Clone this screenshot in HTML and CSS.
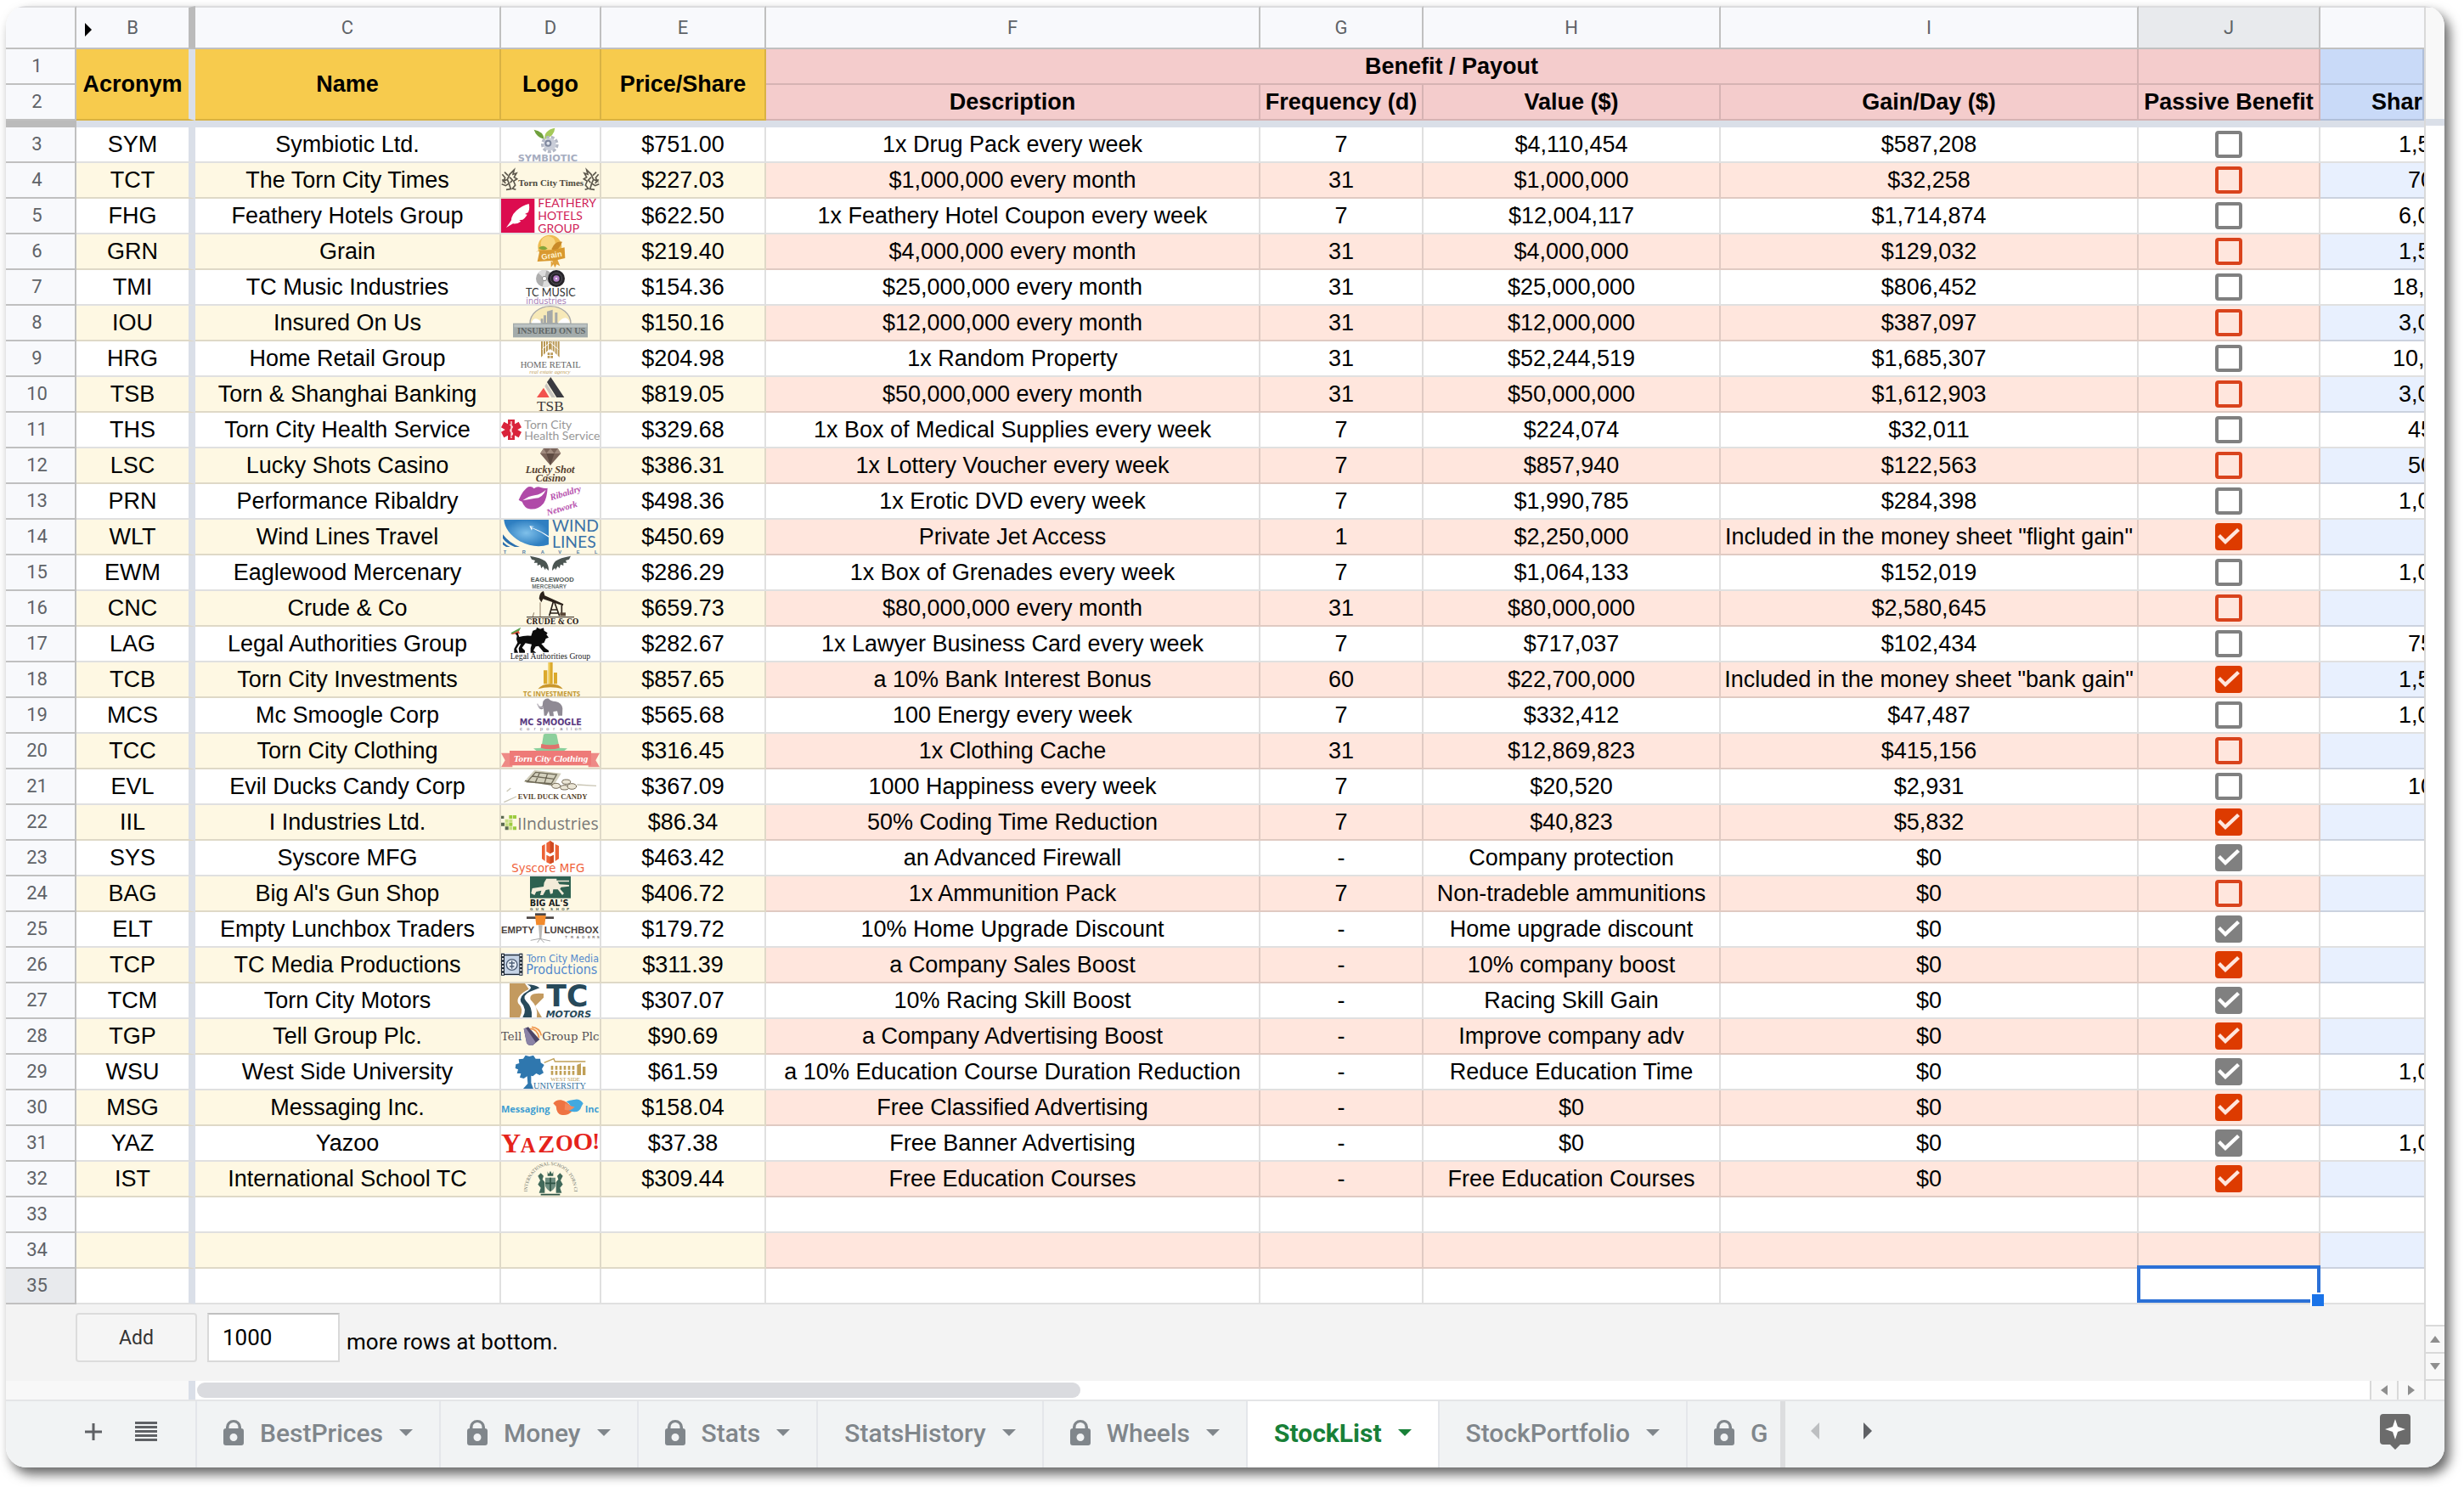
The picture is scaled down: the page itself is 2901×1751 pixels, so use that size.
FILE: index.html
```html
<!DOCTYPE html>
<html lang="en">
<head>
<meta charset="utf-8">
<title>StockList</title>
<link rel="stylesheet" href="styles.css">
</head>
<body>
<main class="window">
<div class="sheet">
<div class="pane">
<table class="grid">
<colgroup><col class="c-num"><col class="c-b"><col class="c-c"><col class="c-d"><col class="c-e"><col class="c-f"><col class="c-g"><col class="c-h"><col class="c-i"><col class="c-j"><col></colgroup>
<thead>
<tr class="letters"><th></th><th class="has-arrow"><svg class="expand" viewBox="0 0 8 16"><path d="M0 0L8 8L0 16Z"/></svg>B</th><th>C</th><th>D</th><th>E</th><th>F</th><th>G</th><th>H</th><th>I</th><th class="current">J</th><th></th></tr>
<tr class="titles"><th class="num">1</th><th class="gold pin" rowspan="2">Acronym</th><th class="gold" rowspan="2">Name</th><th class="gold" rowspan="2">Logo</th><th class="gold" rowspan="2">Price/Share</th><th class="pink" colspan="4">Benefit / Payout</th><th class="pink"></th><th class="blue"></th></tr>
<tr class="titles"><th class="num">2</th><th class="pink">Description</th><th class="pink">Frequency (d)</th><th class="pink">Value ($)</th><th class="pink">Gain/Day ($)</th><th class="pink">Passive Benefit</th><th class="blue cut">Share</th></tr>
<tr class="freeze"><td></td><td colspan="10"></td></tr>
</thead>
<tbody>
<tr><th>3</th><td>SYM</td><td>Symbiotic Ltd.</td><td><svg class="logo" viewBox="0 0 348 120"><path d="M152 42Q150 14 116 8Q124 34 152 42Z" fill="#6fa03c"/><path d="M154 42Q150 10 190 2Q188 32 154 42Z" fill="#a5c95a"/><circle cx="172" cy="60" r="26" fill="none" stroke="#b4b9c6" stroke-width="10" stroke-dasharray="12 6"/><circle cx="172" cy="60" r="22" fill="#c9cdd8"/><circle cx="166" cy="56" r="12" fill="#7d869c"/><circle cx="166" cy="56" r="6" fill="#dfe3ec"/><text x="59" y="119" class="dj b" font-size="34" fill="#a6adc0">SYMBIOTIC</text></svg></td><td>$751.00</td><td>1x Drug Pack every week</td><td>7</td><td>$4,110,454</td><td>$587,208</td><td><input type="checkbox" aria-label="SYM passive benefit"></td><td>1,5</td></tr>
<tr><th>4</th><td>TCT</td><td>The Torn City Times</td><td><svg class="logo" viewBox="0 0 348 120"><g id="griffin" fill="none" stroke="#5d584d" stroke-width="5"><path d="M4 40L14 52L8 64L22 58L30 40L46 24L42 40L54 36L46 50L56 56L44 64L50 78L40 90L52 94M22 58L28 72L16 80L2 74M28 72L34 92L18 94M12 32L24 44M4 58L16 72M30 50L40 60L32 70"/></g><use href="#griffin" transform="matrix(-1 0 0 1 348 0)"/><text x="61" y="82" class="se b" font-size="33" fill="#4f4a40">Torn City Times</text></svg></td><td>$227.03</td><td>$1,000,000 every month</td><td>31</td><td>$1,000,000</td><td>$32,258</td><td><input type="checkbox" aria-label="TCT passive benefit"></td><td class="two">70</td></tr>
<tr><th>5</th><td>FHG</td><td>Feathery Hotels Group</td><td><svg class="logo" viewBox="0 0 348 120"><rect width="118" height="120" fill="#dc0c4f"/><path d="M18 102Q30 86 36 76Q36 58 54 42Q74 24 98 18Q102 34 96 48L84 54L92 56Q86 68 76 74L64 76L70 80Q58 90 42 88Q32 94 18 102Z" fill="#fff"/><g class="la" font-size="42" fill="#d01c56"><text x="130" y="31">FEATHERY</text><text x="130" y="76">HOTELS</text><text x="130" y="119">GROUP</text></g></svg></td><td>$622.50</td><td>1x Feathery Hotel Coupon every week</td><td>7</td><td>$12,004,117</td><td>$1,714,874</td><td><input type="checkbox" aria-label="FHG passive benefit"></td><td>6,0</td></tr>
<tr><th>6</th><td>GRN</td><td>Grain</td><td><svg class="logo" viewBox="0 0 348 120"><circle cx="172" cy="44" r="42" fill="#eebb50"/><circle cx="166" cy="32" r="26" fill="#f8d680"/><path d="M132 48Q150 34 164 50Q148 60 132 48Z" fill="#86a53a"/><path d="M178 52Q190 22 216 26Q206 50 190 62Z" fill="#c98a28"/><path d="M180 92L190 118L196 106L208 112L198 86ZM176 92L176 116L186 104Z" fill="#e0a23c"/><path d="M122 62L136 58L128 96L190 92L226 84L224 46L190 54L134 56Z" fill="#d9992f"/><text x="144" y="90" class="sa b" font-size="28" fill="#fff3cf" transform="rotate(-10 144 90)">Grain</text></svg></td><td>$219.40</td><td>$4,000,000 every month</td><td>31</td><td>$4,000,000</td><td>$129,032</td><td><input type="checkbox" aria-label="GRN passive benefit"></td><td>1,5</td></tr>
<tr><th>7</th><td>TMI</td><td>TC Music Industries</td><td><svg class="logo" viewBox="0 0 348 120"><circle cx="153" cy="30" r="30" fill="#aeaeae"/><path d="M153 30L130 10A30 30 0 0 1 160 1ZM153 30L178 50A30 30 0 0 1 146 59Z" fill="#dcdcdc"/><circle cx="153" cy="30" r="8" fill="#fff" stroke="#8a8a8a" stroke-width="3"/><circle cx="195" cy="30" r="30" fill="#26242a"/><circle cx="195" cy="30" r="20" fill="none" stroke="#56525c" stroke-width="3"/><circle cx="195" cy="30" r="11" fill="#b27fc6"/><circle cx="195" cy="30" r="3" fill="#fff"/><text x="87" y="94" class="la" font-size="38" fill="#333">TC MUSIC</text><text x="88" y="119" class="dj" font-size="29" fill="#a981b8">industries</text></svg></td><td>$154.36</td><td>$25,000,000 every month</td><td>31</td><td>$25,000,000</td><td>$806,452</td><td><input type="checkbox" aria-label="TMI passive benefit"></td><td class="four">18,</td></tr>
<tr><th>8</th><td>IOU</td><td>Insured On Us</td><td><svg class="logo" viewBox="0 0 348 120"><path d="M102 62A72 60 0 0 1 246 62Z" fill="#f7e9b8" stroke="#a9a9a9" stroke-width="4"/><path d="M106 62Q118 30 146 62ZM200 62Q230 24 244 62Z" fill="#fff"/><path d="M140 62V46h8V62ZM150 62V34h9V62ZM162 62V20L182 14V62ZM190 62V24h9V62Z" fill="#a5a8a8"/><rect x="42" y="62" width="264" height="50" fill="#a3abab"/><rect x="46" y="66" width="256" height="10" fill="#bcc3c3"/><text x="57" y="99" class="se b" font-size="31" fill="#5f6666">INSURED ON US</text></svg></td><td>$150.16</td><td>$12,000,000 every month</td><td>31</td><td>$12,000,000</td><td>$387,097</td><td><input type="checkbox" aria-label="IOU passive benefit"></td><td>3,0</td></tr>
<tr><th>9</th><td>HRG</td><td>Home Retail Group</td><td><svg class="logo" viewBox="0 0 348 120"><path d="M141 0h6V50L141 56ZM150 0h6V41L150 47ZM159 0h6V32L159 38ZM168 0h11V32L173 26L168 32ZM182 0h6V38L182 32ZM191 0h6V47L191 41ZM200 0h6V56L200 50Z" fill="#b99753"/><path d="M145 28L173 4L202 28" fill="none" stroke="#fff" stroke-width="3"/><path d="M164 40h8v8h-8ZM175 40h8v8h-8ZM164 51h8v8h-8ZM175 51h8v8h-8Z" fill="#b99753"/><text x="68" y="92" class="se" font-size="32" fill="#666">HOME RETAIL</text><text x="100" y="114" class="se i" font-size="20" fill="#c4a261">real estate agency</text></svg></td><td>$204.98</td><td>1x Random Property</td><td>31</td><td>$52,244,519</td><td>$1,685,307</td><td><input type="checkbox" aria-label="HRG passive benefit"></td><td class="four">10,</td></tr>
<tr><th>10</th><td>TSB</td><td>Torn &amp; Shanghai Banking</td><td><svg class="logo" viewBox="0 0 348 120"><path d="M126 72L150 38L170 72Z" fill="#f2524e"/><path d="M154 32L160 22L192 72H178Z" fill="#c9c6c0"/><path d="M162 18L175 0L223 72H196Z" fill="#3b3b41"/><text x="126" y="119" class="se" font-size="52" fill="#3c3a3a">TSB</text></svg></td><td>$819.05</td><td>$50,000,000 every month</td><td>31</td><td>$50,000,000</td><td>$1,612,903</td><td><input type="checkbox" aria-label="TSB passive benefit"></td><td>3,0</td></tr>
<tr><th>11</th><td>THS</td><td>Torn City Health Service</td><td><svg class="logo" viewBox="0 0 348 120"><path d="M24 24H48V40L62 32L72 52L58 60L72 68L62 88L48 80V96H24V80L10 88L0 68L14 60L0 52L10 32L24 40Z" fill="#d9233a"/><path d="M36 30V90M30 42Q46 48 36 56Q28 64 38 70Q44 76 34 82" fill="none" stroke="#fbdfe2" stroke-width="4"/><g class="la" font-size="42" fill="#989898"><text x="82" y="56">Torn City</text><text x="82" y="95">Health Service</text></g></svg></td><td>$329.68</td><td>1x Box of Medical Supplies every week</td><td>7</td><td>$224,074</td><td>$32,011</td><td><input type="checkbox" aria-label="THS passive benefit"></td><td class="two">45</td></tr>
<tr><th>12</th><td>LSC</td><td>Lucky Shots Casino</td><td><svg class="logo" viewBox="0 0 348 120"><path d="M138 18L150 0H200L211 18L174 60Z" fill="#7b655a"/><path d="M138 18H211L200 0L188 18L174 0L160 18L150 0Z" fill="#a08b7e"/><path d="M160 18H188L174 60Z" fill="#5d4a41"/><g class="se b i" font-size="37" fill="#54402f"><text x="86" y="86">Lucky Shot</text><text x="122" y="118">Casino</text></g></svg></td><td>$386.31</td><td>1x Lottery Voucher every week</td><td>7</td><td>$857,940</td><td>$122,563</td><td><input type="checkbox" aria-label="LSC passive benefit"></td><td class="two">50</td></tr>
<tr><th>13</th><td>PRN</td><td>Performance Ribaldry</td><td><svg class="logo" viewBox="0 0 348 120"><path d="M62 56Q78 20 96 10Q108 6 116 16Q128 6 140 12Q154 16 164 14Q162 50 150 68Q130 92 100 88Q82 84 74 62Q68 60 62 56Z" fill="#b04aa8"/><path d="M76 58Q98 42 118 40Q142 36 158 20Q146 50 120 50Q100 54 76 58Z" fill="#fff"/><g class="se b i" font-size="32" fill="#b752ae"><text x="176" y="58" transform="rotate(-17 176 58)">Ribaldry</text><text x="164" y="112" transform="rotate(-17 164 112)">Network</text></g></svg></td><td>$498.36</td><td>1x Erotic DVD every week</td><td>7</td><td>$1,990,785</td><td>$284,398</td><td><input type="checkbox" aria-label="PRN passive benefit"></td><td>1,0</td></tr>
<tr><th>14</th><td>WLT</td><td>Wind Lines Travel</td><td><svg class="logo" viewBox="0 0 348 120"><defs><radialGradient id="sky"><stop offset="0" stop-color="#7fc0ea"/><stop offset="1" stop-color="#2f7fc1"/></radialGradient></defs><path d="M10 0H168V88Q120 104 66 76Q14 44 10 0Z" fill="url(#sky)"/><path d="M168 58Q140 38 104 26L118 24L100 22L108 38L110 30Q140 42 168 62Z" fill="#fff"/><path d="M6 52Q30 84 66 96H48Q18 84 6 66ZM6 78Q18 90 32 96H18Q8 90 6 88Z" fill="#2a6fae"/><g class="la" font-size="58" fill="#3a72a8"><text x="180" y="43">WIND</text><text x="180" y="98">LINES</text></g><text x="8 74 140 202 266 330" y="119" class="sa b" font-size="17" fill="#4f7ba6">TRAVEL</text></svg></td><td>$450.69</td><td>Private Jet Access</td><td>1</td><td>$2,250,000</td><td>Included in the money sheet "flight gain"</td><td><input type="checkbox" checked aria-label="WLT passive benefit"></td><td></td></tr>
<tr><th>15</th><td>EWM</td><td>Eaglewood Mercenary</td><td><svg class="logo" viewBox="0 0 348 120"><g id="wing" fill="#4b5552"><path d="M102 2Q140 8 156 20Q168 32 168 54L158 44L156 52L148 38L142 46L138 32L128 36L128 26L116 26L120 18L108 14Z"/></g><use href="#wing" transform="matrix(-1 0 0 1 348 0)"/><text x="104" y="92" class="sa b" font-size="23" fill="#4b5552">EAGLEWOOD</text><text x="109" y="118" class="sa b" font-size="19" fill="#6a7371">MERCENARY</text></svg></td><td>$286.29</td><td>1x Box of Grenades every week</td><td>7</td><td>$1,064,133</td><td>$152,019</td><td><input type="checkbox" aria-label="EWM passive benefit"></td><td>1,0</td></tr>
<tr><th>16</th><td>CNC</td><td>Crude &amp; Co</td><td><svg class="logo" viewBox="0 0 348 120"><path d="M134 26Q136 4 150 0L154 16L220 46L218 52L148 28L142 40Z" fill="#2b211a"/><path d="M184 38L170 88M188 38L206 88M178 66H198M174 78H202M214 50V78" stroke="#2b211a" stroke-width="5" fill="none"/><rect x="208" y="76" width="20" height="12" fill="#5a4838"/><path d="M90 92H258" stroke="#2b211a" stroke-width="3"/><path d="M138 40V90M116 76L112 90" stroke="#8a7862" stroke-width="3"/><text x="89" y="118" class="ds b" font-size="25" fill="#2b211a">CRUDE &amp; CO</text></svg></td><td>$659.73</td><td>$80,000,000 every month</td><td>31</td><td>$80,000,000</td><td>$2,580,645</td><td><input type="checkbox" aria-label="CNC passive benefit"></td><td></td></tr>
<tr><th>17</th><td>LAG</td><td>Legal Authorities Group</td><td><svg class="logo" viewBox="0 0 348 120"><path d="M34 22L70 2L64 14L40 28Z" fill="#5aa04a"/><path d="M32 28L62 14L66 24Z" fill="#e2503c"/><path d="M50 24L58 20L64 36Q80 30 106 32L112 14L124 10L126 2L138 8L150 4L152 14L164 22L160 28L168 38L158 42L152 56L142 60L156 76L168 84V90H150L132 68L122 70L114 84L124 92H104V76L108 62L86 58L74 74L84 84V92H64L62 76L70 60L64 62L54 78L60 92H46V78L58 56L54 44L56 32Z" fill="#0c0c0c"/><text x="32" y="114" class="se" font-size="29" fill="#222">Legal Authorities Group</text></svg></td><td>$282.67</td><td>1x Lawyer Business Card every week</td><td>7</td><td>$717,037</td><td>$102,434</td><td><input type="checkbox" aria-label="LAG passive benefit"></td><td class="two">75</td></tr>
<tr><th>18</th><td>TCB</td><td>Torn City Investments</td><td><svg class="logo" viewBox="0 0 348 120"><path d="M150 28h13V76h-13ZM167 0h15V76h-15ZM186 36h12V76h-12Z" fill="#dba92c"/><path d="M167 0h6V76h-6Z" fill="#f0cd58"/><path d="M130 94Q144 76 174 76Q206 76 218 94Q174 82 130 94Z" fill="#c9962a"/><text x="78" y="121" class="os b" font-size="24" fill="#c39a35">TC INVESTMENTS</text></svg></td><td>$857.65</td><td>a 10% Bank Interest Bonus</td><td>60</td><td>$22,700,000</td><td>Included in the money sheet "bank gain"</td><td><input type="checkbox" checked aria-label="TCB passive benefit"></td><td>1,5</td></tr>
<tr><th>19</th><td>MCS</td><td>Mc Smoogle Corp</td><td><svg class="logo" viewBox="0 0 348 120"><path d="M148 12Q156 0 168 2Q174 10 192 12Q214 16 217 36L216 62H202L198 46L184 48L186 64H172L168 46L160 62H152L150 36Q144 44 134 36L130 24Q138 34 146 28Z" fill="#8f8a94"/><path d="M150 32Q134 40 128 20" fill="none" stroke="#b8b3bc" stroke-width="4"/><text x="65" y="97" class="dc b" font-size="32" fill="#5b3b82">MC SMOOGLE</text><text x="66 91 116 138 160 184 208 230 246 260 274" y="115" class="sa" font-size="17" fill="#77717e">corporation</text></svg></td><td>$565.68</td><td>100 Energy every week</td><td>7</td><td>$332,412</td><td>$47,487</td><td><input type="checkbox" aria-label="MCS passive benefit"></td><td>1,0</td></tr>
<tr><th>20</th><td>TCC</td><td>Torn City Clothing</td><td><svg class="logo" viewBox="0 0 348 120"><path d="M0 68H40V118H0L14 94ZM348 68H308V118H348L334 94Z" fill="#ee8a86"/><path d="M142 50L150 2Q174 -6 196 2L206 50L234 52Q220 68 174 68Q128 68 114 52Z" fill="#8ccf9c"/><path d="M142 36Q174 44 204 36L206 50Q174 60 140 50Z" fill="#e0716c"/><path d="M30 60H318V112H30Z" fill="#ee7a78"/><text x="44" y="98" class="se b i" font-size="34" fill="#fff">Torn City Clothing</text></svg></td><td>$316.45</td><td>1x Clothing Cache</td><td>31</td><td>$12,869,823</td><td>$415,156</td><td><input type="checkbox" aria-label="TCC passive benefit"></td><td></td></tr>
<tr><th>21</th><td>EVL</td><td>Evil Ducks Candy Corp</td><td><svg class="logo" viewBox="0 0 348 120"><path d="M80 44L118 2L212 14L186 56Z" fill="#d3d0bd"/><path d="M92 44L122 10L196 18L178 50ZM84 40L186 56M110 24L188 34M136 12L120 48M164 14L152 52" fill="none" stroke="#6f6a58" stroke-width="4"/><g fill="#ebe6d6" stroke="#6f6450" stroke-width="3"><ellipse cx="194" cy="58" rx="15" ry="9"/><ellipse cx="224" cy="64" rx="15" ry="8"/><ellipse cx="250" cy="60" rx="16" ry="10"/><ellipse cx="230" cy="44" rx="15" ry="8"/></g><path d="M268 54L336 58M20 78L34 66M10 116L54 96" stroke="#c9c5b4" stroke-width="4"/><text x="59" y="104" class="se b" font-size="26" fill="#57432c">EVIL DUCK CANDY</text></svg></td><td>$367.09</td><td>1000 Happiness every week</td><td>7</td><td>$20,520</td><td>$2,931</td><td><input type="checkbox" aria-label="EVL passive benefit"></td><td class="two">10</td></tr>
<tr><th>22</th><td>IIL</td><td>I Industries Ltd.</td><td><svg class="logo" viewBox="0 0 348 120"><path d="M28 36h12v12H28ZM42 36h12v12H42ZM28 62h12v12H28ZM42 76h12v12H42Z" fill="#9ccb3f"/><path d="M14 50h12v12H14ZM28 50h12v12H28ZM28 76h12v12H28ZM14 64h12v12H14Z" fill="#c7dd83"/><path d="M0 62h12v12H0ZM14 76h12v12H14ZM0 38h10v10H0Z" fill="#5c6b52"/><text x="58" y="86" class="os" font-size="58" fill="#777">IIndustries</text></svg></td><td>$86.34</td><td>50% Coding Time Reduction</td><td>7</td><td>$40,823</td><td>$5,832</td><td><input type="checkbox" checked aria-label="IIL passive benefit"></td><td></td></tr>
<tr><th>23</th><td>SYS</td><td>Syscore MFG</td><td><svg class="logo" viewBox="0 0 348 120"><path d="M144 18L155 12V72L144 64ZM160 8L173 0L186 8V38L173 46L160 38ZM160 50L173 56L186 50V76L173 82L160 76ZM191 12L204 18V64L191 72Z" fill="#ec6236"/><path d="M173 0L186 8V38L173 46ZM173 56L186 50V76L173 82Z" fill="#cf4a22"/><text x="37" y="111" class="dj" font-size="40" fill="#f0633c">Syscore MFG</text></svg></td><td>$463.42</td><td>an Advanced Firewall</td><td>-</td><td>Company protection</td><td>$0</td><td><input type="checkbox" checked aria-label="SYS passive benefit"></td><td></td></tr>
<tr><th>24</th><td>BAG</td><td>Big Al's Gun Shop</td><td><svg class="logo" viewBox="0 0 348 120"><rect x="102" width="144" height="77" fill="#2e6150"/><path d="M106 60L110 42L150 36L152 22L160 8H196V14H240V19H200L206 28L240 30V35L212 38L208 44L222 60L216 66L200 46L184 46L182 60L174 62L170 46L158 48L148 66H138L142 50L124 54L118 66Z" fill="#f3ecd9"/><text x="101" y="105" class="dj b" font-size="29" fill="#16201c">BIG AL'S</text><text x="102 122 142 174 194 214 232" y="119" class="sa b" font-size="13" fill="#2e4a40">GUNSHOP</text></svg></td><td>$406.72</td><td>1x Ammunition Pack</td><td>7</td><td>Non-tradeble ammunitions</td><td>$0</td><td><input type="checkbox" aria-label="BAG passive benefit"></td><td></td></tr>
<tr><th>25</th><td>ELT</td><td>Empty Lunchbox Traders</td><td><svg class="logo" viewBox="0 0 348 120"><path d="M90 16H186V24H90Z" fill="#4d4543"/><path d="M120 4H158V12H120Z" fill="#4d4543"/><path d="M120 12H158L154 46H124Z" fill="#f28a2c"/><path d="M132 46H146L142 96H136Z" fill="#b9b7b5"/><path d="M104 100L136 94L174 102M128 108L138 94L152 108" fill="none" stroke="#aaa" stroke-width="3"/><g class="sa b" font-size="34" fill="#4b4341"><text x="0" y="75">EMPTY</text><text x="152" y="75">LUNCHBOX</text></g><text x="226 246 266 286 306 322 338" y="92" class="sa b" font-size="13" fill="#7d7674">TRADERS</text></svg></td><td>$179.72</td><td>10% Home Upgrade Discount</td><td>-</td><td>Home upgrade discount</td><td>$0</td><td><input type="checkbox" checked aria-label="ELT passive benefit"></td><td></td></tr>
<tr><th>26</th><td>TCP</td><td>TC Media Productions</td><td><svg class="logo" viewBox="0 0 348 120"><path d="M0 20H76V98H0Z" fill="#c5d3e6"/><path d="M6 20V98M70 20V98" stroke="#1d2733" stroke-width="12"/><path d="M6 24V98M70 24V98" stroke="#fff" stroke-width="6" stroke-dasharray="6 7"/><path d="M12 26H64M12 94H64" stroke="#1d2733" stroke-width="4"/><circle cx="38" cy="60" r="19" fill="#e6edf5" stroke="#4c5d74" stroke-width="4"/><path d="M38 46V74M28 54H48M30 66H46" stroke="#4c5d74" stroke-width="4"/><g class="dc" fill="#5288cc"><text x="90" y="50" font-size="37">Torn City Media</text><text x="88" y="94" font-size="48">Productions</text></g></svg></td><td>$311.39</td><td>a Company Sales Boost</td><td>-</td><td>10% company boost</td><td>$0</td><td><input type="checkbox" checked aria-label="TCP passive benefit"></td><td></td></tr>
<tr><th>27</th><td>TCM</td><td>Torn City Motors</td><td><svg class="logo" viewBox="0 0 348 120"><path d="M30 0H150V50L120 80L144 120H30Z" fill="#c39a5f"/><path d="M84 0H150V36Q96 30 104 58Q132 84 126 120H66Q82 90 60 70Q50 44 98 20Z" fill="#fff"/><path d="M92 4Q120 4 136 16L100 30Q72 44 88 62Q112 84 108 120H76Q94 92 70 66Q62 44 96 26Q116 14 92 4Z" fill="#27495a"/><text x="160" y="80" class="dj b" font-size="104" fill="#27495a">TC</text><text x="158" y="119" class="dj b i" font-size="33" fill="#27495a">MOTORS</text></svg></td><td>$307.07</td><td>10% Racing Skill Boost</td><td>-</td><td>Racing Skill Gain</td><td>$0</td><td><input type="checkbox" checked aria-label="TCM passive benefit"></td><td></td></tr>
<tr><th>28</th><td>TGP</td><td>Tell Group Plc.</td><td><svg class="logo" viewBox="0 0 348 120"><path d="M80 34L96 28L136 72L112 92Q96 96 90 84Z" fill="#4d4668"/><path d="M80 34L88 32L122 82L112 92Q96 96 90 84Z" fill="#8a83a6"/><path d="M102 34Q128 34 134 66M108 28Q136 30 142 58" fill="none" stroke="#f0964c" stroke-width="5"/><g class="ds" font-size="40" fill="#544f55"><text x="0" y="76">Tell</text><text x="145" y="76">Group Plc</text></g></svg></td><td>$90.69</td><td>a Company Advertising Boost</td><td>-</td><td>Improve company adv</td><td>$0</td><td><input type="checkbox" checked aria-label="TGP passive benefit"></td><td></td></tr>
<tr><th>29</th><td>WSU</td><td>West Side University</td><td><svg class="logo" viewBox="0 0 348 120"><path d="M52 34L64 30L62 16L78 14L86 2L100 6L114 2L122 14L138 14L140 28L152 36L144 50L150 64L136 72L124 66L112 76L106 74V100L114 120H78L94 102L92 76L80 84L66 80L70 66L56 66L60 52L50 48Z" fill="#2f77ae"/><path d="M152 28L186 14L190 24H298" fill="none" stroke="#c0a057" stroke-width="4"/><path d="M176 46H262M176 64H262" stroke="#c0a057" stroke-width="14" stroke-dasharray="8 7"/><path d="M268 36L282 30V72H268ZM288 42h10V72h-10Z" fill="#c0a057"/><text x="175" y="92" class="se" font-size="20" fill="#b5954e">WEST SIDE</text><text x="114" y="119" class="se" font-size="31" fill="#33729f">UNIVERSITY</text></svg></td><td>$61.59</td><td>a 10% Education Course Duration Reduction</td><td>-</td><td>Reduce Education Time</td><td>$0</td><td><input type="checkbox" checked aria-label="WSU passive benefit"></td><td>1,0</td></tr>
<tr><th>30</th><td>MSG</td><td>Messaging Inc.</td><td><svg class="logo" viewBox="0 0 348 120"><path d="M184 46Q194 32 212 34Q236 40 248 60L250 74Q236 90 212 86Q196 82 194 56Z" fill="#ee7342"/><path d="M290 46Q280 30 262 32Q240 34 230 40Q252 50 240 72Q276 84 284 56Z" fill="#42a9e0"/><path d="M226 44Q246 56 260 58Q246 76 224 68Z" fill="#f5895c"/><g class="os b" font-size="33" fill="#3d9dd2"><text x="0" y="78">Messaging</text><text x="296" y="78">Inc</text></g></svg></td><td>$158.04</td><td>Free Classified Advertising</td><td>-</td><td>$0</td><td>$0</td><td><input type="checkbox" checked aria-label="MSG passive benefit"></td><td></td></tr>
<tr><th>31</th><td>YAZ</td><td>Yazoo</td><td><svg class="logo" viewBox="0 0 348 120"><g class="se b" fill="#e5231b"><text x="0" y="92" font-size="96">Y</text><text x="68" y="92" font-size="74">A</text><text x="130" y="92" font-size="90">Z</text><text x="192" y="87" font-size="80">O</text><text x="254" y="84" font-size="90">O</text><text x="322" y="82" font-size="80">!</text></g></svg></td><td>$37.38</td><td>Free Banner Advertising</td><td>-</td><td>$0</td><td>$0</td><td><input type="checkbox" checked aria-label="YAZ passive benefit"></td><td>1,0</td></tr>
<tr><th>32</th><td>IST</td><td>International School TC</td><td><svg class="logo" viewBox="0 0 348 120"><path id="arch" d="M92 106A83 94 0 0 1 258 106" fill="none"/><text class="se" font-size="17" fill="#6d7269"><textPath href="#arch">INTERNATIONAL SCHOOL TORN CITY</textPath></text><path d="M164 34L168 44L174 32L180 44L184 34V50H164Z" fill="#355f4f"/><path d="M130 50L140 40L150 50L146 62L154 72V110H134L140 92L130 80L138 66ZM218 50L208 40L198 50L202 62L194 72V110H214L208 92L218 80L210 66Z" fill="#41695a"/><path d="M156 56H192V86Q186 100 174 104Q162 100 156 86Z" fill="#6d8d80"/><path d="M174 56V104M156 76H192M140 116H208" stroke="#2e5445" stroke-width="5"/></svg></td><td>$309.44</td><td>Free Education Courses</td><td>-</td><td>Free Education Courses</td><td>$0</td><td><input type="checkbox" checked aria-label="IST passive benefit"></td><td></td></tr>
<tr><th>33</th><td></td><td></td><td></td><td></td><td></td><td></td><td></td><td></td><td></td><td></td></tr>
<tr><th>34</th><td></td><td></td><td></td><td></td><td></td><td></td><td></td><td></td><td></td><td></td></tr>
<tr><th class="current">35</th><td></td><td></td><td></td><td></td><td></td><td></td><td></td><td></td><td class="selected"></td><td></td></tr>
</tbody>
</table>
<form class="add-rows">
<button type="button" class="add">Add</button>
<input id="count" class="count" type="text" value="1000">
<label for="count">more rows at bottom.</label>
</form>
<div class="hscroll"><span class="hs-fixed"></span><span class="hs-track"><span class="hs-thumb"></span></span><button type="button" aria-label="Scroll left"><svg width="8" height="12" viewBox="0 0 8 12"><path d="M8 0V12L0 6Z"/></svg></button><button type="button" aria-label="Scroll right"><svg width="8" height="12" viewBox="0 0 8 12"><path d="M0 0V12L8 6Z"/></svg></button></div>
</div>
<div class="vscroll"><span class="vs-head"></span><span class="vs-track"></span><button type="button" aria-label="Scroll up"><svg width="12" height="8" viewBox="0 0 12 8"><path d="M0 8H12L6 0Z"/></svg></button><button type="button" aria-label="Scroll down"><svg width="12" height="8" viewBox="0 0 12 8"><path d="M0 0H12L6 8Z"/></svg></button><span class="vs-corner"></span></div>
</div>
<svg class="defs" width="0" height="0"><symbol id="lock" viewBox="0 0 24 30"><path d="M3 10V8.500A9 8.500 0 0 1 21 8.500V10A3 3 0 0 1 24 13V27A3 3 0 0 1 21 30H3A3 3 0 0 1 0 27V13A3 3 0 0 1 3 10ZM6.500 10H17.500V8.500A5.500 5.500 0 0 0 6.500 8.500ZM12 16A4.500 4.500 0 1 0 12 25A4.500 4.500 0 1 0 12 16Z" fill-rule="evenodd"/></symbol><symbol id="down" viewBox="0 0 16 8"><path d="M0 0H16L8 8Z"/></symbol></svg>
<nav class="tabs">
<div class="tools">
<button type="button" aria-label="Add sheet"><svg width="20" height="20" viewBox="0 0 20 20"><path d="M8.500 0h3v8.500H20v3H11.500V20h-3V11.500H0v-3H8.500Z"/></svg></button>
<button type="button" aria-label="All sheets"><svg width="26" height="24" viewBox="0 0 26 24"><path d="M0 0H26V3H0ZM0 5H26V8H0ZM0 10H26V13H0ZM0 15H26V18H0ZM0 20H26V23H0Z"/></svg></button>
</div>
<div class="strip">
<button type="button" class="tab"><svg class="lock"><use href="#lock"/></svg>BestPrices<svg class="down"><use href="#down"/></svg></button>
<button type="button" class="tab"><svg class="lock"><use href="#lock"/></svg>Money<svg class="down"><use href="#down"/></svg></button>
<button type="button" class="tab"><svg class="lock"><use href="#lock"/></svg>Stats<svg class="down"><use href="#down"/></svg></button>
<button type="button" class="tab">StatsHistory<svg class="down"><use href="#down"/></svg></button>
<button type="button" class="tab"><svg class="lock"><use href="#lock"/></svg>Wheels<svg class="down"><use href="#down"/></svg></button>
<button type="button" class="tab active">StockList<svg class="down"><use href="#down"/></svg></button>
<button type="button" class="tab">StockPortfolio<svg class="down"><use href="#down"/></svg></button>
<button type="button" class="tab"><svg class="lock"><use href="#lock"/></svg>G</button>
</div>
<div class="pager">
<button type="button" class="off" aria-label="Previous sheets"><svg width="10" height="20" viewBox="0 0 10 20"><path d="M10 0V20L0 10Z"/></svg></button>
<button type="button" aria-label="Next sheets"><svg width="10" height="20" viewBox="0 0 10 20"><path d="M0 0V20L10 10Z"/></svg></button>
</div>
<button type="button" class="explore" aria-label="Explore"><svg width="36" height="42" viewBox="0 0 36 42"><path d="M4 0H32A4 4 0 0 1 36 4V32A4 4 0 0 1 32 36H24L18 42L12 36H4A4 4 0 0 1 0 32V4A4 4 0 0 1 4 0Z" fill="#6b6b6b"/><path d="M18 6L21 15L30 18L21 21L18 30L15 21L6 18L15 15Z" fill="#fff"/></svg></button>
</nav>
</main>
</body>
</html>
```
FILE: styles.css
```css
* { box-sizing: border-box; }

body {
  margin: 0;
  padding: 7px 23px 23px 7px;
  background: #fff;
  font-family: "Liberation Sans", Arial, sans-serif;
  font-size: 27px;
  color: #000;
}

button {
  margin: 0;
  padding: 0;
  border: 0;
  background: none;
  font-family: Roboto, sans-serif;
}

svg { display: block; }
.defs { position: absolute; }

.window {
  overflow: hidden;
  border-radius: 24px;
  background: #fff;
  box-shadow: 6px 8px 14px rgba(0, 0, 0, 0.6);
}

.sheet { display: flex; }
.pane { flex: 1; min-width: 0; overflow: hidden; }

/* Spreadsheet grid */
.grid {
  width: 100%;
  table-layout: fixed;
  border-collapse: separate;
  border-spacing: 0;
}
.c-num { width: 83px; }
.c-b { width: 140px; }
.c-c { width: 360px; }
.c-d { width: 118px; }
.c-e { width: 194px; }
.c-f { width: 582px; }
.c-g { width: 192px; }
.c-h { width: 350px; }
.c-i { width: 492px; }
.c-j { width: 214px; }

.grid th,
.grid td {
  height: 42px;
  padding: 0;
  border: 0 solid rgba(0, 0, 0, 0.12);
  border-width: 0 2px 2px 0;
  line-height: 30px;
  text-align: center;
  white-space: nowrap;
  overflow: hidden;
}

.grid .letters th {
  height: 51px;
  border-color: #c0c0c0;
  border-top: 2px solid #dcdcde;
  background: #f8f9fc;
  color: #5f6368;
  font: 400 22px/30px Roboto, sans-serif;
}
.grid .letters .has-arrow {
  position: relative;
  border-right: 8px solid #bbb;
}
.expand {
  position: absolute;
  left: 10px;
  top: 18px;
  width: 8px;
  height: 16px;
}

.grid .num,
.grid tbody th {
  padding-right: 8px;
  border-color: #c0c0c0;
  background: #f8f9fc;
  color: #5f6368;
  font: 400 22px/30px Roboto, sans-serif;
}
.grid .letters .current,
.grid tbody .current { background: #e8eaed; }

.titles .gold { background: #f7cb4d; }
.titles .pink { background: #f4cccc; }
.titles .blue { background: #c9daf8; }
.grid .pin,
.grid tbody td:nth-child(2) { border-right: 8px solid #dadfe8; }
.grid .cut { padding-left: 60px; text-align: left; }

.grid .freeze td {
  height: 8px;
  border: 0;
  background: #dadfe8;
}
.grid .freeze td:first-child { background: #bbb; }

.grid tbody tr:nth-child(even) td { background: #fef8e3; }
.grid tbody tr:nth-child(even) td:nth-child(n+6) { background: #ffe6dd; }
.grid tbody tr:nth-child(even) td:nth-child(11) { background: #e8f0fe; }
.grid tbody td:nth-child(11) { padding-left: 92px; text-align: left; }
.grid tbody td.two { padding-left: 103px; }
.grid tbody td.four { padding-left: 85px; }
.grid tr > :nth-child(11) { border-right: 0; }

.grid input {
  appearance: none;
  display: block;
  width: 32px;
  height: 32px;
  margin: 0 auto;
  border: 4px solid #808080;
  border-radius: 4px;
}
.grid tr:nth-child(even) input { border-color: #d9431c; }
.grid input:checked { border: 0; background: #808080; }
.grid tr:nth-child(even) input:checked { background: #dd3b00; }
.grid input:checked::before {
  content: "";
  display: block;
  height: 32px;
  background: #fff;
  clip-path: polygon(3px 16px, 6px 13px, 12px 19px, 26px 6px, 29px 9px, 12px 25px);
}
.grid tr:nth-child(even) input:checked::before { background: #ffe6dd; }

.grid tbody .selected { position: relative; overflow: visible; }
.selected::before {
  content: "";
  position: absolute;
  inset: -4px -2px 0 -2px;
  border: 4px solid #2b70d6;
}
.selected::after {
  content: "";
  position: absolute;
  right: -6px;
  bottom: -4px;
  width: 14px;
  height: 14px;
  border: 2px solid #fff;
  border-width: 2px 0 0 2px;
  background: #1a73e8;
}

/* Logos */
.logo { width: 116px; height: 40px; }
.sa { font-family: "Liberation Sans", sans-serif; }
.se { font-family: "Liberation Serif", serif; }
.la { font-family: Lato, sans-serif; }
.os { font-family: "Open Sans", sans-serif; }
.dj { font-family: "DejaVu Sans", sans-serif; }
.dc { font-family: "DejaVu Sans Condensed", "DejaVu Sans", sans-serif; }
.ds { font-family: "DejaVu Serif", serif; }
.b { font-weight: 700; }
.i { font-style: italic; }

/* Add rows bar */
.add-rows {
  display: flex;
  height: 90px;
  padding: 10px 0 0 82px;
  background: #f3f3f3;
  font: 400 26px/30px Roboto, sans-serif;
}
.add {
  width: 143px;
  height: 58px;
  border: 2px solid #dcdcdc;
  border-radius: 4px;
  background: #f5f5f5;
  color: #333;
  font-size: 23px;
}
.count {
  width: 156px;
  height: 58px;
  margin: 0 8px 0 12px;
  padding: 0 16px;
  border: 2px solid #d9d9d9;
  border-top-color: #c0c0c0;
  background: #fff;
  color: #000;
  font: inherit;
}
.add-rows label { padding-top: 19px; }

/* Scrollbars */
.hscroll { display: flex; height: 22px; background: #fff; }
.hs-fixed {
  width: 223px;
  border-right: 8px solid #dadfe8;
  background: #f8f8f8;
}
.hs-track { flex: 1; padding: 2px; }
.hs-thumb {
  display: block;
  width: 1040px;
  max-width: 100%;
  height: 18px;
  border-radius: 9px;
  background: #dadbdf;
}
.hscroll button,
.vscroll button {
  display: flex;
  align-items: center;
  justify-content: center;
  background: #f8f8f8;
}
.hscroll button { width: 32px; border-left: 2px solid #d9d9d9; }
.hscroll path,
.vscroll path { fill: #8e8e8e; }

.vscroll {
  display: flex;
  flex-direction: column;
  width: 24px;
  border-left: 2px solid #d9d9d9;
}
.vs-head {
  height: 141px;
  border-top: 2px solid #dcdcde;
  border-bottom: 8px solid #dadfe8;
  background: #f8f8f8;
}
.vs-track { flex: 1; }
.vscroll button { height: 32px; border-top: 2px solid #d9d9d9; }
.vs-corner { height: 24px; border-top: 2px solid #d9d9d9; background: #f8f8f8; }

/* Sheet tabs */
.tabs {
  display: flex;
  height: 80px;
  border-top: 2px solid #e4e5e7;
  background: #f1f3f4;
}
.tools {
  display: flex;
  align-items: center;
  gap: 39px;
  width: 225px;
  padding: 0 0 6px 93px;
  border-right: 2px solid #e4e6ea;
}
.tools path { fill: #5f6165; }
.strip {
  display: flex;
  flex: 0 1 1870px;
  min-width: 0;
  overflow: hidden;
  border-right: 6px solid #dcdddf;
}
.tab {
  display: flex;
  flex: none;
  align-items: center;
  gap: 19px;
  padding: 0 31px 4px;
  border-right: 2px solid #e4e6ea;
  color: #80868b;
  font-size: 30px;
  font-weight: 500;
}
.tab:last-child { border-right: 0; }
.tab svg { fill: currentColor; }
.lock { width: 24px; height: 30px; }
.down { width: 16px; height: 8px; }
.tab.active { background: #fff; color: #188038; font-weight: 700; }
.pager {
  display: flex;
  align-items: center;
  gap: 52px;
  padding: 0 30px 8px;
}
.pager path { fill: #5f6165; }
.pager .off path { fill: #bdbfc1; }
.explore { margin: 0 40px 6px auto; }
```
